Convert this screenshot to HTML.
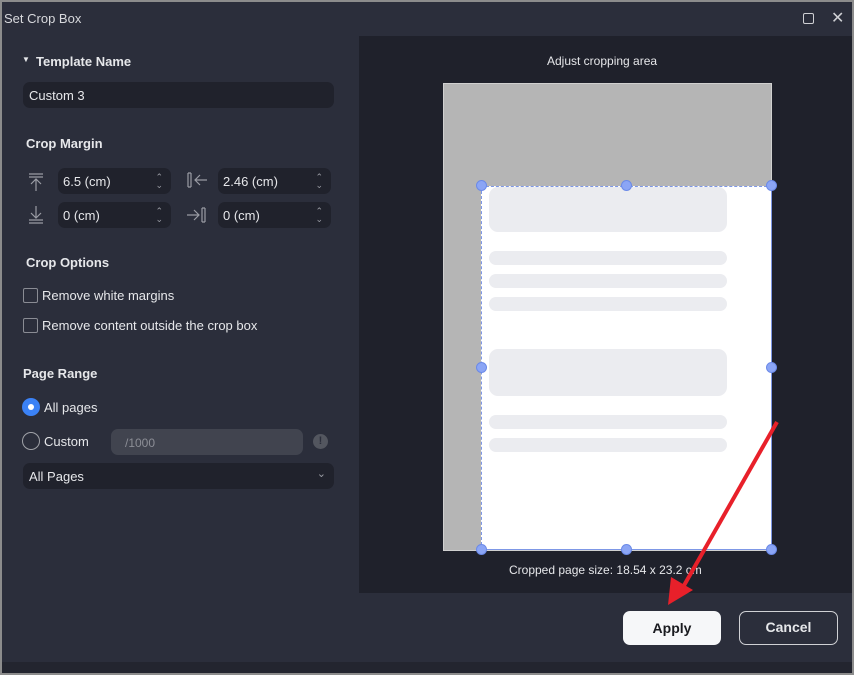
<!DOCTYPE html>
<html><head><style>
*{margin:0;padding:0;box-sizing:border-box}
body{width:854px;height:675px;background:#8c8c8c;font-family:"Liberation Sans",sans-serif;overflow:hidden;position:relative}
.win{position:absolute;left:2px;top:2px;width:850px;height:671px;background:#2b2e3b}
.a{position:absolute}
.t{color:#e6e7ea;font-size:13px}
.h{color:#e6e7ea;font-size:13px;font-weight:bold}
.inp{background:#20222c;border-radius:7px;height:26px}
.sk{position:absolute;background:#ebecf0;width:238px}
.hd{position:absolute;width:11px;height:11px;border-radius:50%;background:#8ba5f5;border:1px solid #6b8ae8}
.spin{position:absolute;right:8px;top:5px;color:#9a9ca4;font-size:9px;line-height:8px}
</style></head><body>
<div class="win">
<div class="a" style="left:2px;top:9px;color:#d8d9dd;font-size:13px">Set Crop Box</div>
<div class="a" style="left:801px;top:11px;width:11px;height:11px;border:1.5px solid #cfd0d4;border-radius:2px"></div>
<div class="a" style="left:829px;top:6px;color:#cfd0d4;font-size:16px">✕</div>

<div class="a" style="left:20px;top:53px;color:#e6e7ea;font-size:8px">▼</div>
<div class="a h" style="left:34px;top:52px">Template Name</div>
<div class="a inp" style="left:21px;top:80px;width:311px"><span class="t" style="position:absolute;left:6px;top:6px">Custom 3</span></div>
<div class="a h" style="left:24px;top:134px">Crop Margin</div>

<svg class="a" style="left:26px;top:170px" width="16" height="20"><path d="M1 2h14M1 5h14M8 7v12M3 12l5-5 5 5" stroke="#9a9ca4" fill="none" stroke-width="1.2"/></svg>
<div class="a inp" style="left:56px;top:166px;width:113px"><span class="t" style="position:absolute;left:5px;top:6px">6.5 (cm)</span><div class="spin">⌃<br>⌄</div></div>
<svg class="a" style="left:184px;top:170px" width="22" height="16"><path d="M2 1v14M5 1v14M2 1h3M2 15h3M9 8h12M14 3l-5 5 5 5" stroke="#9a9ca4" fill="none" stroke-width="1.2"/></svg>
<div class="a inp" style="left:216px;top:166px;width:113px"><span class="t" style="position:absolute;left:5px;top:6px">2.46 (cm)</span><div class="spin">⌃<br>⌄</div></div>

<svg class="a" style="left:26px;top:203px" width="16" height="20"><path d="M8 1v12M3 8l5 5 5-5M1 15h14M1 18h14" stroke="#9a9ca4" fill="none" stroke-width="1.2"/></svg>
<div class="a inp" style="left:56px;top:200px;width:113px"><span class="t" style="position:absolute;left:5px;top:6px">0 (cm)</span><div class="spin">⌃<br>⌄</div></div>
<svg class="a" style="left:184px;top:205px" width="22" height="16"><path d="M1 8h12M8 3l5 5-5 5M16 1v14M19 1v14M16 1h3M16 15h3" stroke="#9a9ca4" fill="none" stroke-width="1.2"/></svg>
<div class="a inp" style="left:216px;top:200px;width:113px"><span class="t" style="position:absolute;left:5px;top:6px">0 (cm)</span><div class="spin">⌃<br>⌄</div></div>

<div class="a h" style="left:24px;top:253px">Crop Options</div>
<div class="a" style="left:21px;top:286px;width:15px;height:15px;border:1.5px solid #8a8c94;border-radius:2px"></div>
<div class="a t" style="left:40px;top:286px">Remove white margins</div>
<div class="a" style="left:21px;top:316px;width:15px;height:15px;border:1.5px solid #8a8c94;border-radius:2px"></div>
<div class="a t" style="left:40px;top:316px">Remove content outside the crop box</div>

<div class="a h" style="left:21px;top:364px">Page Range</div>
<div class="a" style="left:20px;top:396px;width:18px;height:18px;border-radius:50%;background:#3b82f6"><div style="position:absolute;left:6px;top:6px;width:6px;height:6px;border-radius:50%;background:#fff"></div></div>
<div class="a t" style="left:42px;top:398px">All pages</div>
<div class="a" style="left:20px;top:430px;width:18px;height:18px;border-radius:50%;border:1.5px solid #a0a2a8"></div>
<div class="a t" style="left:42px;top:432px">Custom</div>
<div class="a" style="left:109px;top:427px;width:192px;height:26px;background:#41444f;border-radius:7px"><span style="position:absolute;left:14px;top:7px;color:#8c8e96;font-size:12px">/1000</span></div>
<div class="a" style="left:311px;top:432px;width:15px;height:15px;border-radius:50%;background:#53565f;color:#2b2e3b;font-size:11px;font-weight:bold;text-align:center;line-height:15px">!</div>
<div class="a inp" style="left:21px;top:461px;width:311px"><span class="t" style="position:absolute;left:6px;top:6px">All Pages</span><span style="position:absolute;right:8px;top:4px;color:#9a9ca4;font-size:11px">⌄</span></div>

<div class="a" style="left:357px;top:34px;width:493px;height:557px;background:#1f212b"></div>
<div class="a" style="left:545px;top:52px;color:#e6e7ea;font-size:12px">Adjust cropping area</div>
<div class="a" style="left:441px;top:81px;width:329px;height:468px;background:#b5b5b5;border:1px solid #d0d0d0"></div>
<div class="a" style="left:479px;top:184px;width:291px;height:364px;background:#fff;border-left:1px dashed #7d97e6;border-top:1px dashed #7d97e6;border-bottom:1px solid #7d97e6;border-right:1px solid #7d97e6"></div>
<div class="sk" style="left:487px;top:185px;height:45px;border-radius:9px"></div>
<div class="sk" style="left:487px;top:249px;height:14px;border-radius:7px"></div>
<div class="sk" style="left:487px;top:272px;height:14px;border-radius:7px"></div>
<div class="sk" style="left:487px;top:295px;height:14px;border-radius:7px"></div>
<div class="sk" style="left:487px;top:347px;height:47px;border-radius:9px"></div>
<div class="sk" style="left:487px;top:413px;height:14px;border-radius:7px"></div>
<div class="sk" style="left:487px;top:436px;height:14px;border-radius:7px"></div>
<div class="hd" style="left:474px;top:178px"></div>
<div class="hd" style="left:619px;top:178px"></div>
<div class="hd" style="left:764px;top:178px"></div>
<div class="hd" style="left:474px;top:360px"></div>
<div class="hd" style="left:764px;top:360px"></div>
<div class="hd" style="left:474px;top:542px"></div>
<div class="hd" style="left:619px;top:542px"></div>
<div class="hd" style="left:764px;top:542px"></div>
<div class="a" style="left:507px;top:561px;color:#e6e7ea;font-size:12px">Cropped page size: 18.54 x 23.2 cm</div>

<div class="a" style="left:621px;top:609px;width:98px;height:34px;background:#f6f7f9;border-radius:7px;color:#1a1b20;font-size:14px;font-weight:bold;text-align:center;line-height:34px">Apply</div>
<div class="a" style="left:737px;top:609px;width:99px;height:34px;border:1.5px solid #d0d1d5;border-radius:7px;color:#e6e7ea;font-size:14px;font-weight:bold;text-align:center;line-height:31px">Cancel</div>
<div class="a" style="left:0;top:660px;width:850px;height:11px;background:#23252f"></div>
<svg class="a" style="left:0;top:0" width="850" height="671"><path d="M775 420L676 594" stroke="#e8202a" stroke-width="4"/><path d="M666 603L669 575 691 588Z" fill="#e8202a"/></svg>
</div>
</body></html>
